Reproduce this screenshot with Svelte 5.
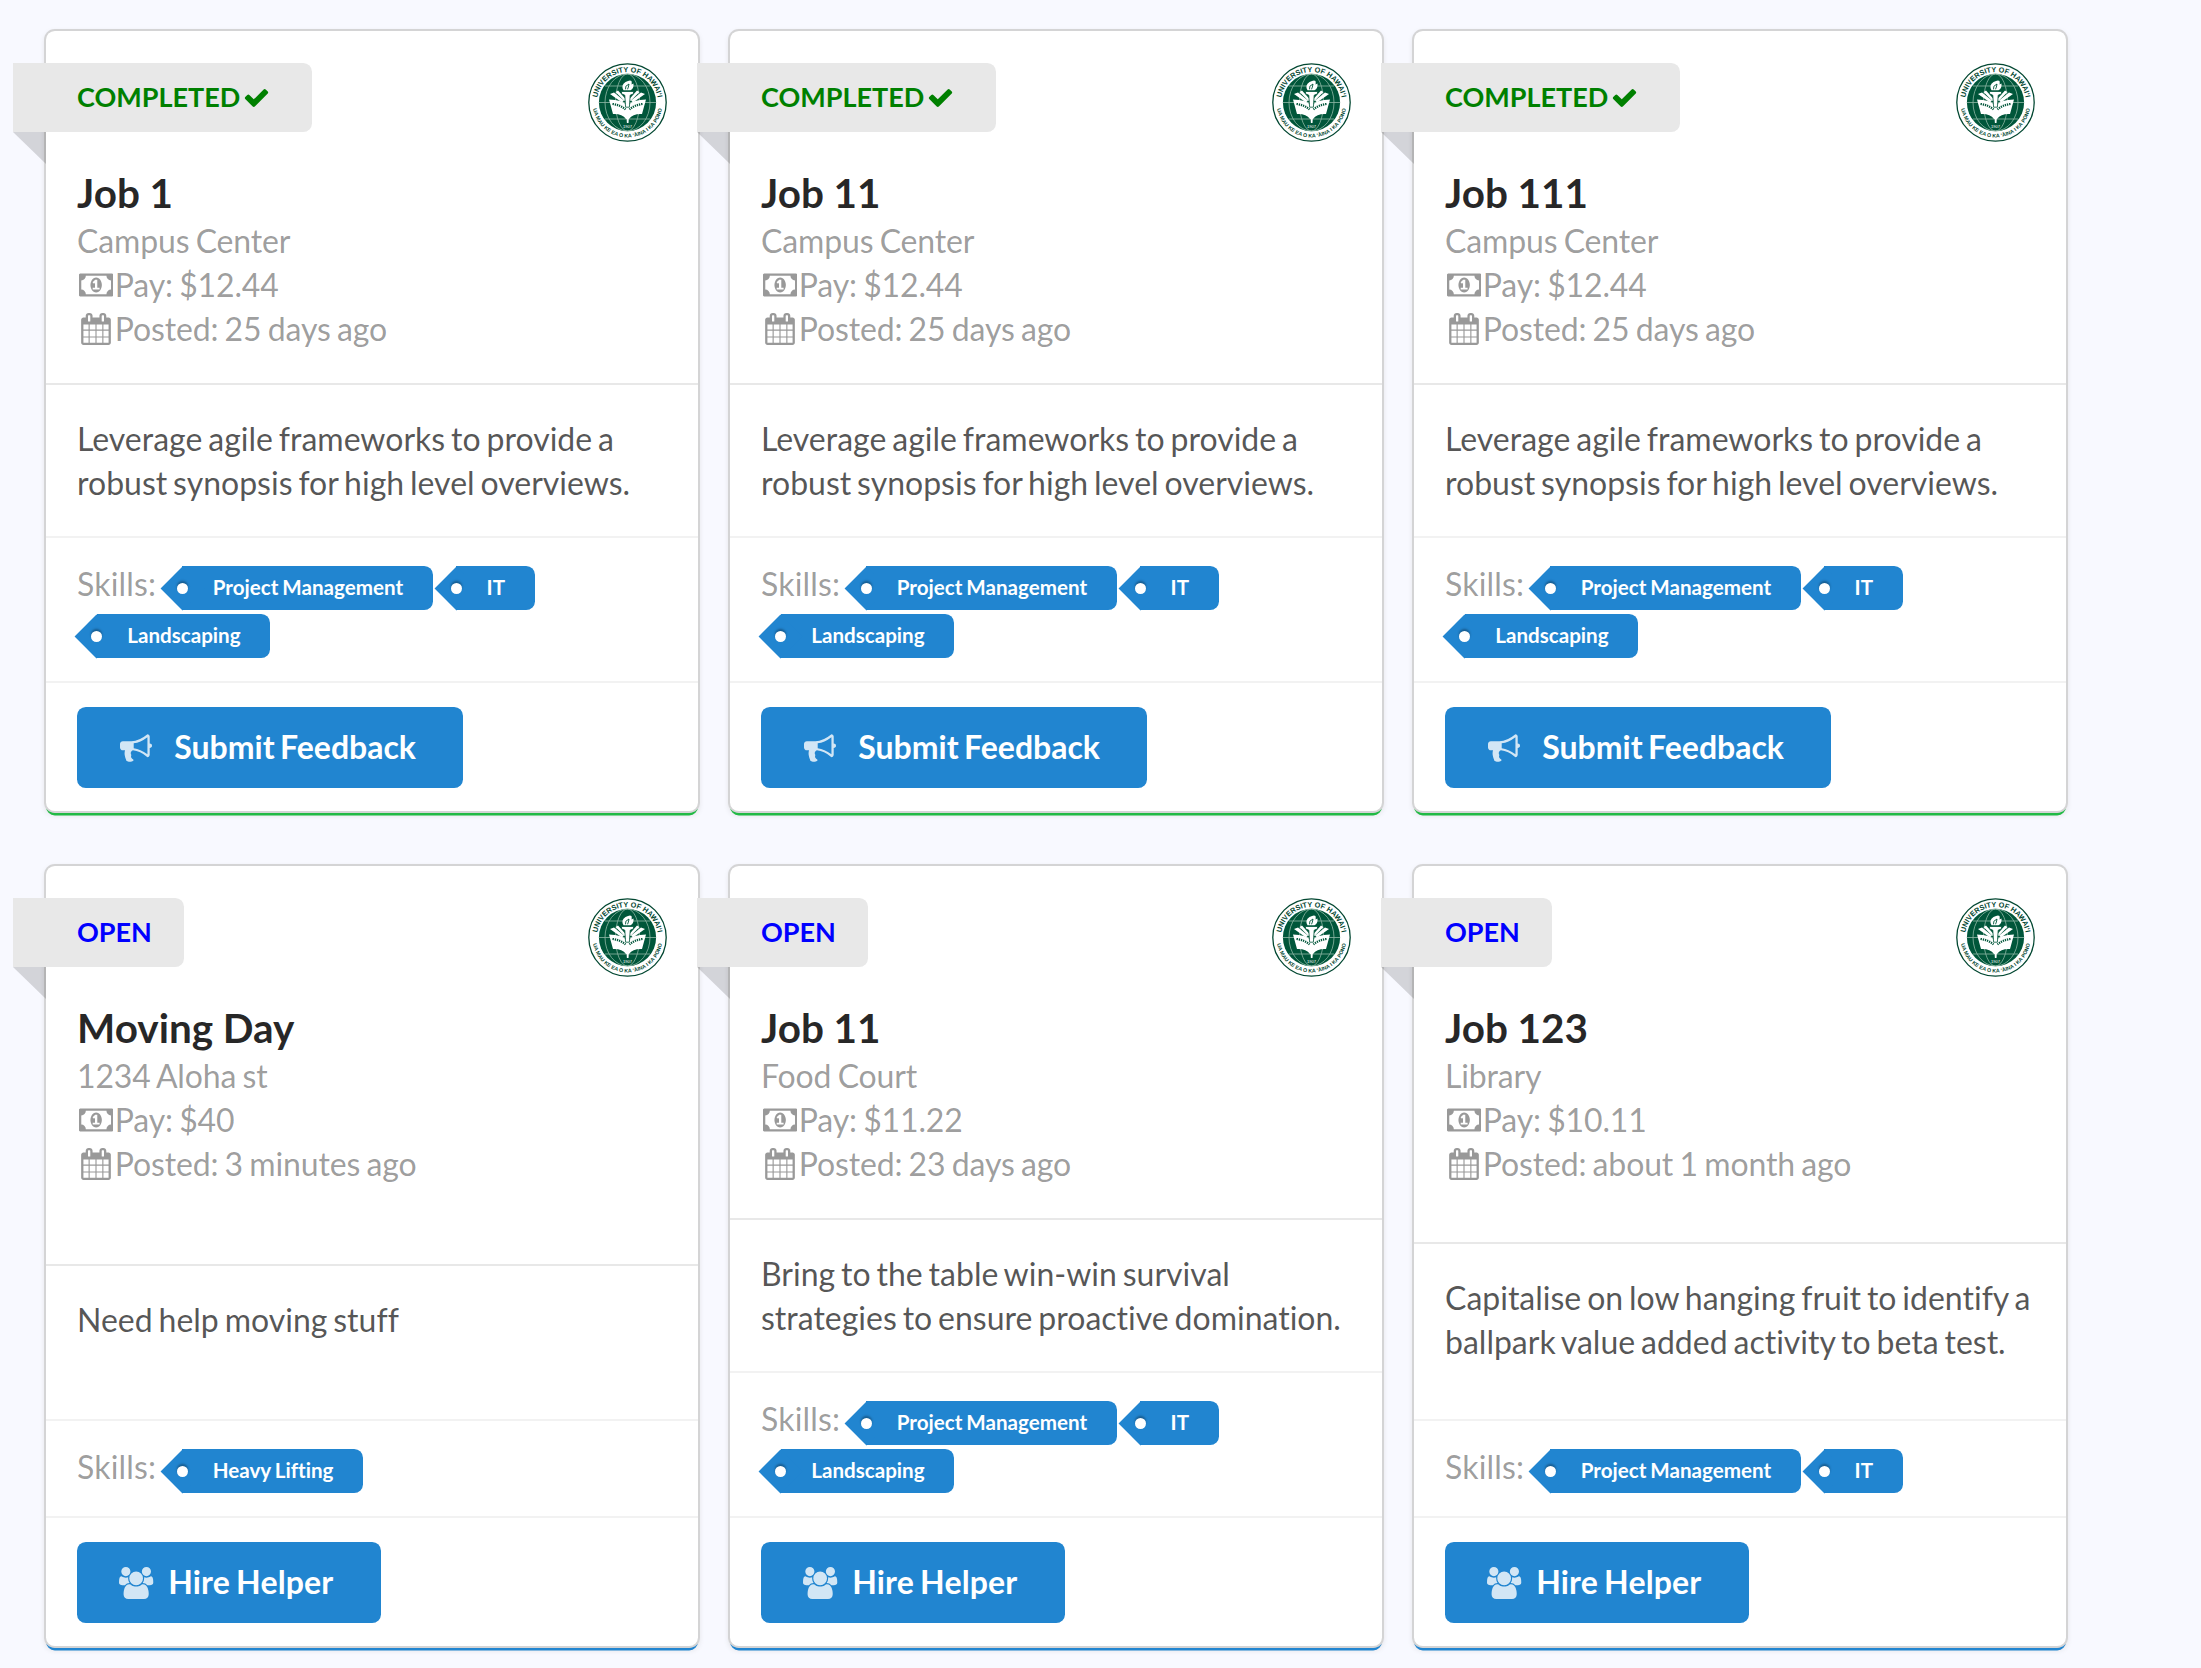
<script>
  const agile = 'Leverage agile frameworks to provide a robust synopsis for high level overviews.';
  const all = ['Project Management', 'IT', 'Landscaping'];

  const jobs = [
    { title: 'Job 1', place: 'Campus Center', pay: '$12.44', posted: '25 days ago', text: agile, skills: all, done: true },
    { title: 'Job 11', place: 'Campus Center', pay: '$12.44', posted: '25 days ago', text: agile, skills: all, done: true },
    { title: 'Job 111', place: 'Campus Center', pay: '$12.44', posted: '25 days ago', text: agile, skills: all, done: true },
    { title: 'Moving Day', place: '1234 Aloha st', pay: '$40', posted: '3 minutes ago', text: 'Need help moving stuff', skills: ['Heavy Lifting'], done: false },
    { title: 'Job 11', place: 'Food Court', pay: '$11.22', posted: '23 days ago', text: 'Bring to the table win-win survival strategies to ensure proactive domination.', skills: all, done: false },
    { title: 'Job 123', place: 'Library', pay: '$10.11', posted: 'about 1 month ago', text: 'Capitalise on low hanging fruit to identify a ballpark value added activity to beta test.', skills: ['Project Management', 'IT'], done: false }
  ];

  const icons = {
    check: { w: 1792, d: 'M1671 566q0 40-28 68l-724 724-136 136q-28 28-68 28t-68-28l-136-136-362-362q-28-28-28-68t28-68l136-136q28-28 68-28t68 28l294 295 656-657q28-28 68-28t68 28l136 136q28 28 28 68z' },
    calendar: { w: 1792, d: 'M192 1664h288v-288h-288v288zm352 0h320v-288h-320v288zm-352-352h288v-320h-288v320zm352 0h320v-320h-320v320zm-352-384h288v-288h-288v288zm736 736h320v-288h-320v288zm-384-736h320v-288h-320v288zm768 736h288v-288h-288v288zm-384-352h320v-320h-320v320zm-352-864v-288q0-13-9.5-22.5t-22.5-9.5h-64q-13 0-22.5 9.5t-9.5 22.5v288q0 13 9.5 22.5t22.5 9.5h64q13 0 22.5-9.5t9.5-22.5zm736 864h288v-320h-288v320zm-384-384h320v-288h-320v288zm384 0h288v-288h-288v288zm32-480v-288q0-13-9.5-22.5t-22.5-9.5h-64q-13 0-22.5 9.5t-9.5 22.5v288q0 13 9.5 22.5t22.5 9.5h64q13 0 22.5-9.5t9.5-22.5zm384-64v1280q0 52-38 90t-90 38h-1408q-52 0-90-38t-38-90v-1280q0-52 38-90t90-38h128v-96q0-66 47-113t113-47h64q66 0 113 47t47 113v96h384v-96q0-66 47-113t113-47h64q66 0 113 47t47 113v96h128q52 0 90 38t38 90z' },
    money: { w: 1920, d: 'M768 1152h384v-96h-128v-448h-114l-148 137 77 80q42-37 55-57h2v288h-128v96zm512-256q0 70-21 142t-59.5 134-101.5 101-138 39-138-39-101.5-101-59.5-134-21-142 21-142 59.5-134 101.5-101 138-39 138 39 101.5 101 59.5 134 21 142zm512 256v-512q-106 0-181-75t-75-181h-1152q0 106-75 181t-181 75v512q106 0 181 75t75 181h1152q0-106 75-181t181-75zm128-832v1152q0 26-19 45t-45 19h-1792q-26 0-45-19t-19-45v-1152q0-26 19-45t45-19h1792q26 0 45 19t19 45z' },
    horn: { w: 1792, d: 'M1664 640q53 0 90.5 37.5t37.5 90.5-37.5 90.5-90.5 37.5v384q0 52-38 90t-90 38q-417-347-812-380-58 19-91 66t-31 100.5 40 92.5q-20 33-23 65.5t6 58 33.5 55 48 50 61.5 50.5q-29 58-111.5 83t-168.5 11.5-132-55.5q-7-23-29.5-87.5t-32-94.5-23-89-15-101 3.5-98.5 22-110.5h-122q-66 0-113-47t-47-113v-192q0-66 47-113t113-47h480q435 0 896-384 52 0 90 38t38 90v384zm-128 604v-954q-394 302-768 343v270q377 42 768 341z' },
    group: { w: 1920, d: 'M593 896q-162 5-265 128h-134q-82 0-138-40.5t-56-118.5q0-353 124-353 6 0 43.5 21t97.5 42.5 119 21.5q67 0 133-23-5 37-5 66 0 139 81 256zm1071 637q0 120-73 189.5t-194 69.5h-874q-121 0-194-69.5t-73-189.5q0-53 3.5-103.5t14-109 26.5-108.5 43-97.5 62-81 85.5-53.5 111.5-20q10 0 43 21.5t73 48 107 48 135 21.5 135-21.5 107-48 73-48 43-21.5q61 0 111.5 20t85.5 53.5 62 81 43 97.5 26.5 108.5 14 109 3.5 103.5zm-1024-1277q0 106-75 181t-181 75-181-75-75-181 75-181 181-75 181 75 75 181zm704 384q0 159-112.5 271.5t-271.5 112.5-271.5-112.5-112.5-271.5 112.5-271.5 271.5-112.5 271.5 112.5 112.5 271.5zm576 225q0 78-56 118.5t-138 40.5h-134q-103-123-265-128 81-117 81-256 0-29-5-66 66 23 133 23 59 0 119-21.5t97.5-42.5 43.5-21q124 0 124 353zm-128-609q0 106-75 181t-181 75-181-75-75-181 75-181 181-75 181 75 75 181z' }
  };
</script>

{#snippet icon(name)}
  <span class="icon {name}">
    <svg viewBox="0 0 {icons[name].w} 1792" aria-hidden="true"><path d={icons[name].d} /></svg>
  </span>
{/snippet}

{#snippet seal(id)}
  <svg class="seal" viewBox="0 0 79 79" role="img" aria-label="University of Hawaiʻi seal">
    <defs>
      <path id="top-{id}" d="M9 39.500a30.500 30.500 0 0 1 61 0" />
      <path id="low-{id}" d="M4.500 39.500a35 35 0 0 0 70 0" />
    </defs>
    <circle cx="39.500" cy="39.500" r="38.700" fill="#fff" stroke="#024731" stroke-width="1.300" />
    <circle cx="39.500" cy="39.500" r="28.600" fill="#00563a" />
    <g fill="none" stroke="#8fb8a6" stroke-width=".8">
      <ellipse cx="39.500" cy="39.500" rx="22.500" ry="28.500" />
      <ellipse cx="39.500" cy="39.500" rx="12" ry="28.500" />
      <path d="M17 23h45M11 39.500h57M17 56h45" />
    </g>
    <g fill="#fff">
      <path d="M26 29.500l10 8-2 2-12-8.500zM53 29.500l-10 8 2 2 12-8.500z" />
      <path d="M30 27.500l8 9-1.500 1.500-9-9zM49 27.500l-8 9 1.500 1.500 9-9z" />
      <path d="M21 36.500q13 0 18.500 6 5.500-6 18.500-6l-4 14.500q-9-.5-13 5h-3q-4-5.500-13-5z" />
      <path d="M38.300 50h2.800l-.6 10h-1.600z" />
    </g>
    <path d="M33.500 28.500h12v2.300l-3.300 1.400-.8 12h-3.800l-.8-12-3.300-1.400z" fill="#fff" stroke="#00563a" stroke-width=".8" />
    <path d="M35.500 27.300q-3-5 2-8.300 4.500-2.500 6-1 .5 2 0 3.500l2-1q.5 5-3 6.800z" fill="#fff" />
    <path d="M37.500 26.300q-1-3.500 3.500-5.300-.5 3.500-1.500 5.300" fill="none" stroke="#00563a" stroke-width=".9" />
    <path d="M24.500 41q8 1 13 5.500M54.500 41q-8 1-13 5.500" fill="none" stroke="#00563a" stroke-width="2.200" stroke-dasharray="1.300 .9" />
    <g fill="#024731" font-weight="700">
      <text font-size="7.300" text-anchor="middle"><textPath href="#top-{id}" startOffset="50%" textLength="86" lengthAdjust="spacingAndGlyphs">UNIVERSITY OF HAWAI‘I</textPath></text>
      <text font-size="5.200" text-anchor="middle"><textPath href="#low-{id}" startOffset="50%" textLength="97" lengthAdjust="spacingAndGlyphs">UA MAU KE EA O KA ‘ĀINA I KA PONO</textPath></text>
    </g>
    <text x="39.500" y="64.500" font-size="4" fill="#fff" text-anchor="middle">1907</text>
  </svg>
{/snippet}

<main>
  {#each jobs as job, i}
    <article class="card" class:done={job.done}>
      <section class="content head">
        <div class="top">
          <div class="ribbon"><span class="status">{job.done ? 'COMPLETED' : 'OPEN'}</span>{#if job.done}{@render icon('check')}{/if}</div>
          {@render seal(i)}
        </div>
        <h2>{job.title}</h2>
        <div class="meta">{job.place}</div>
        <div class="meta">{@render icon('money')}Pay: {job.pay}</div>
        <div class="meta">{@render icon('calendar')}Posted: {job.posted}</div>
      </section>
      <section class="content about">{job.text}</section>
      <section class="extra skills">
        <span class="caption">Skills:</span>
        {#each job.skills as skill}
          <span class="tag">{skill}</span>
        {/each}
      </section>
      <section class="extra action">
        <button class:hire={!job.done}>
          {@render icon(job.done ? 'horn' : 'group')}<span class="text">{job.done ? 'Submit Feedback' : 'Hire Helper'}</span>
        </button>
      </section>
    </article>
  {/each}
</main>

<style>
  :global(body) {
    background: #f8f9ff;
    overflow: hidden;
  }
  main {
    display: grid;
    grid-template-columns: repeat(3, 652px);
    grid-template-rows: 780px 780px;
    gap: 55px 32px;
    height: 1668px;
    box-sizing: border-box;
    padding: 31px 0 0 46px;
    font: 32px/44px Lato, 'Liberation Sans', sans-serif;
    font-variant-ligatures: none;
    word-spacing: -2.3px;
    color: rgba(0, 0, 0, 0.68);
  }
  .card {
    display: flex;
    flex-direction: column;
    background: #fff;
    border-radius: 8.8px;
    box-shadow: 0 0 0 2px #d4d4d5, 0 4.4px 0 0 #2185d0, 0 2.2px 6.6px 0 #d4d4d5;
  }
  .card.done {
    box-shadow: 0 0 0 2px #d4d4d5, 0 4.4px 0 0 #21ba45, 0 2.2px 6.6px 0 #d4d4d5;
  }
  .content {
    flex: 1 0 auto;
    box-sizing: border-box;
  }
  .head {
    padding: 32px 31px 31px;
  }
  .top {
    display: flex;
    justify-content: space-between;
    height: 104px;
  }
  .ribbon {
    position: relative;
    display: flex;
    align-items: center;
    height: 69px;
    box-sizing: border-box;
    margin-left: -64px;
    padding: 0 32px 0 64px;
    border-radius: 0 8.8px 8.8px 0;
    background: #e8e8e8;
    color: #0000ff;
    font-size: 27px;
    font-weight: 700;
    line-height: 67px;
  }
  .status {
    height: 69px;
  }
  .done .ribbon {
    color: #008000;
  }
  .ribbon::after {
    content: '';
    position: absolute;
    left: 0;
    top: 100%;
    border-style: solid;
    border-width: 0 33px 32px 0;
    border-color: transparent rgba(0, 0, 0, 0.15) transparent transparent;
  }
  .seal {
    width: 79px;
    height: 79px;
    font-family: 'Liberation Sans', sans-serif;
    word-spacing: 0;
  }
  h2 {
    margin: 0 0 1px;
    font-size: 40.5px;
    line-height: 51px;
    font-weight: 700;
    word-spacing: -0.3px;
    color: rgba(0, 0, 0, 0.85);
  }
  .meta,
  .caption {
    color: rgba(0, 0, 0, 0.4);
  }
  .meta {
    display: flex;
    height: 44px;
    letter-spacing: -0.15px;
    word-spacing: -1.7px;
  }
  .icon {
    display: flex;
    flex: none;
    justify-content: center;
    align-items: center;
    width: 1.18em;
    height: 44px;
  }
  .icon.check {
    margin-right: 8px;
  }
  .icon svg {
    height: 1em;
    fill: currentColor;
  }
  .about {
    border-top: 2px solid #e8e8e8;
    padding: 32px 26px 31px 31px;
  }
  .extra {
    flex: none;
    border-top: 2px solid #f2f2f2;
  }
  .skills {
    display: flex;
    flex-wrap: wrap;
    gap: 4px 3.6px;
    padding: 28px 31px 23px;
  }
  .caption {
    line-height: 36px;
    height: 44px;
    margin-right: 2.8px;
    letter-spacing: 0.15px;
  }
  .tag {
    position: relative;
    height: 44px;
    margin-left: 19.8px;
    padding: 0 29.6px 0 30.5px;
    border-radius: 0 8.8px 8.8px 0;
    background: #2185d0;
    color: #fff;
    font-size: 20.6px;
    font-weight: 700;
    line-height: 43px;
    word-spacing: -1px;
  }
  .tag::before {
    content: '';
    position: absolute;
    left: -15.5px;
    top: 6.5px;
    width: 31px;
    height: 31px;
    background: #2185d0;
    transform: rotate(45deg);
  }
  .tag::after {
    content: '';
    position: absolute;
    left: -5.5px;
    top: 16.5px;
    width: 11px;
    height: 11px;
    border-radius: 50%;
    background: #fff;
    box-shadow: 0 -2.2px 2.2px 0 rgba(0, 0, 0, 0.3);
  }
  .action {
    padding: 24px 31px 23px;
  }
  button {
    display: flex;
    align-items: center;
    height: 81px;
    padding: 0 47.5px 0 40.5px;
    border: 0;
    border-radius: 8.8px;
    background: #2185d0;
    color: #fff;
    font: 700 32px/44px Lato, 'Liberation Sans', sans-serif;
    word-spacing: -2.3px;
  }
  button .text {
    padding-bottom: 2px;
  }
  button .icon {
    opacity: 0.8;
    margin-right: 19px;
  }
  button.hire {
    letter-spacing: 0.15px;
    word-spacing: -1.8px;
  }
  button.hire .icon {
    margin-right: 13px;
  }
</style>
